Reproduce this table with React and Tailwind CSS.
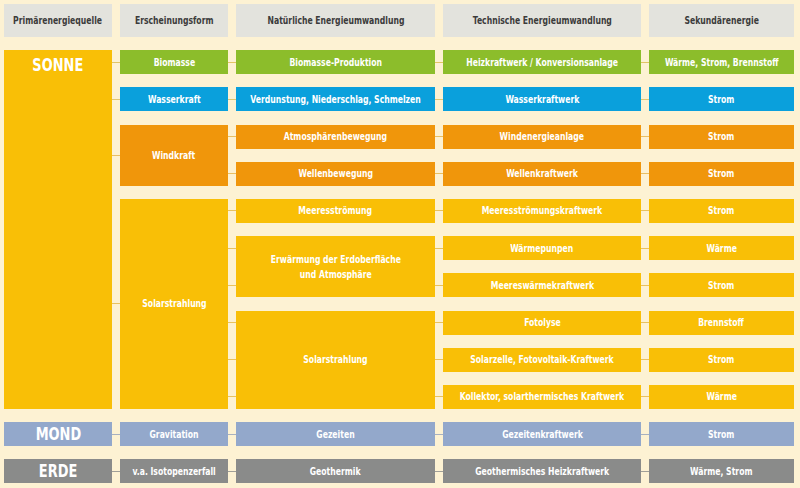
const tones = {
  head: { box: 'bg-[#e3e3dd] text-[#3b3b3b] font-semibold', line: '' },
  green: { box: 'bg-[#8cbd2b] text-white font-bold', line: 'bg-[#e2c465]' },
  blue: { box: 'bg-[#0aa0dc] text-white font-bold', line: 'bg-[#e2c76f]' },
  orange: { box: 'bg-[#f0960b] text-white font-bold', line: 'bg-[#e9bf63]' },
  yellow: { box: 'bg-[#f9bf06] text-white font-bold', line: 'bg-[#e9c25f]' },
  moon: { box: 'bg-[#93a8cb] text-white font-bold', line: 'bg-[#a8b1c0]' },
  earth: { box: 'bg-[#8a8b8a] text-white font-bold', line: 'bg-[#a09f98]' },
};

// col, row, span, tone, text, link: 'center' | 'rows'
const cells = [
  [1, 1, 1, 'head', 'Primärenergiequelle'],
  [2, 1, 1, 'head', 'Erscheinungsform'],
  [3, 1, 1, 'head', 'Natürliche Energieumwandlung'],
  [4, 1, 1, 'head', 'Technische Energieumwandlung'],
  [5, 1, 1, 'head', 'Sekundärenergie'],

  [2, 2, 1, 'green', 'Biomasse', 'center'],
  [3, 2, 1, 'green', 'Biomasse-Produktion', 'rows'],
  [4, 2, 1, 'green', 'Heizkraftwerk / Konversionsanlage', 'rows'],
  [5, 2, 1, 'green', 'Wärme, Strom, Brennstoff', 'rows'],

  [2, 3, 1, 'blue', 'Wasserkraft', 'center'],
  [3, 3, 1, 'blue', 'Verdunstung, Niederschlag, Schmelzen', 'rows'],
  [4, 3, 1, 'blue', 'Wasserkraftwerk', 'rows'],
  [5, 3, 1, 'blue', 'Strom', 'rows'],

  [2, 4, 2, 'orange', 'Windkraft', 'center'],
  [3, 4, 1, 'orange', 'Atmosphärenbewegung', 'rows'],
  [4, 4, 1, 'orange', 'Windenergieanlage', 'rows'],
  [5, 4, 1, 'orange', 'Strom', 'rows'],
  [3, 5, 1, 'orange', 'Wellenbewegung', 'rows'],
  [4, 5, 1, 'orange', 'Wellenkraftwerk', 'rows'],
  [5, 5, 1, 'orange', 'Strom', 'rows'],

  [2, 6, 6, 'yellow', 'Solarstrahlung', 'center'],
  [3, 6, 1, 'yellow', 'Meeresströmung', 'rows'],
  [4, 6, 1, 'yellow', 'Meeresströmungskraftwerk', 'rows'],
  [5, 6, 1, 'yellow', 'Strom', 'rows'],
  [3, 7, 2, 'yellow', 'Erwärmung der Erdoberfläche\nund Atmosphäre', 'rows'],
  [4, 7, 1, 'yellow', 'Wärmepunpen', 'rows'],
  [5, 7, 1, 'yellow', 'Wärme', 'rows'],
  [4, 8, 1, 'yellow', 'Meereswärmekraftwerk', 'rows'],
  [5, 8, 1, 'yellow', 'Strom', 'rows'],
  [3, 9, 3, 'yellow', 'Solarstrahlung', 'rows'],
  [4, 9, 1, 'yellow', 'Fotolyse', 'rows'],
  [5, 9, 1, 'yellow', 'Brennstoff', 'rows'],
  [4, 10, 1, 'yellow', 'Solarzelle, Fotovoltaik-Kraftwerk', 'rows'],
  [5, 10, 1, 'yellow', 'Strom', 'rows'],
  [4, 11, 1, 'yellow', 'Kollektor, solarthermisches Kraftwerk', 'rows'],
  [5, 11, 1, 'yellow', 'Wärme', 'rows'],

  [2, 12, 1, 'moon', 'Gravitation', 'center'],
  [3, 12, 1, 'moon', 'Gezeiten', 'rows'],
  [4, 12, 1, 'moon', 'Gezeitenkraftwerk', 'rows'],
  [5, 12, 1, 'moon', 'Strom', 'rows'],

  [2, 13, 1, 'earth', 'v.a. Isotopenzerfall', 'center'],
  [3, 13, 1, 'earth', 'Geothermik', 'rows'],
  [4, 13, 1, 'earth', 'Geothermisches Heizkraftwerk', 'rows'],
  [5, 13, 1, 'earth', 'Wärme, Strom', 'rows'],
];

const colStart = ['', 'col-start-1', 'col-start-2', 'col-start-3', 'col-start-4', 'col-start-5'];
const rowStart = ['', 'row-start-1', 'row-start-2', 'row-start-3', 'row-start-4', 'row-start-5', 'row-start-6', 'row-start-7', 'row-start-8', 'row-start-9', 'row-start-10', 'row-start-11', 'row-start-12', 'row-start-13'];
const rowSpan = ['', 'row-span-1', 'row-span-2', 'row-span-3', 'row-span-4', 'row-span-5', 'row-span-6'];

function Links({ link, span, line }) {
  if (!link) return null;
  if (link === 'center') {
    return (
      <div className="absolute -left-2 top-0 bottom-0 w-2 flex items-center">
        <div className={`h-px w-full ${line}`} />
      </div>
    );
  }
  return (
    <div className="absolute -left-2 top-0 bottom-0 w-2 flex flex-col gap-y-[13.2px]">
      {Array.from({ length: span }).map((_, i) => (
        <div key={i} className="h-6 flex items-center">
          <div className={`h-px w-full ${line}`} />
        </div>
      ))}
    </div>
  );
}

function Cell({ col, row, span, tone, text, link }) {
  const t = tones[tone];
  return (
    <div
      className={`relative ${colStart[col]} ${rowStart[row]} ${rowSpan[span]} ${t.box} flex items-center justify-center text-center text-[10.5px] leading-[15px]`}
    >
      <span className="inline-block whitespace-pre scale-x-[0.815]">{text}</span>
      <Links link={link} span={span} line={t.line} />
    </div>
  );
}

function Source({ children }) {
  return (
    <span className="inline-block text-white text-[18px] font-bold leading-6 scale-x-[0.8]">
      {children}
    </span>
  );
}

export default function App() {
  return (
    <div className="w-[800px] h-[488px] bg-[#fdf2d3] overflow-hidden font-['DejaVu_Sans_Condensed','Liberation_Sans',sans-serif]">
      <div className="grid grid-cols-[108px_108px_199px_198px_145px] grid-rows-[33px_repeat(12,24px)] gap-x-2 gap-y-[13.2px] pt-1 pl-1">
        {/* Primary sources */}
        <div className="col-start-1 row-start-2 row-span-10 bg-[#f9bf06] flex justify-center pt-[3px]">
          <Source>SONNE</Source>
        </div>
        <div className="col-start-1 row-start-12 bg-[#93a8cb] flex items-center justify-center">
          <Source>MOND</Source>
        </div>
        <div className="col-start-1 row-start-13 bg-[#8a8b8a] flex items-center justify-center">
          <Source>ERDE</Source>
        </div>

        {cells.map(([col, row, span, tone, text, link], i) => (
          <Cell key={i} col={col} row={row} span={span} tone={tone} text={text} link={link} />
        ))}
      </div>
    </div>
  );
}
